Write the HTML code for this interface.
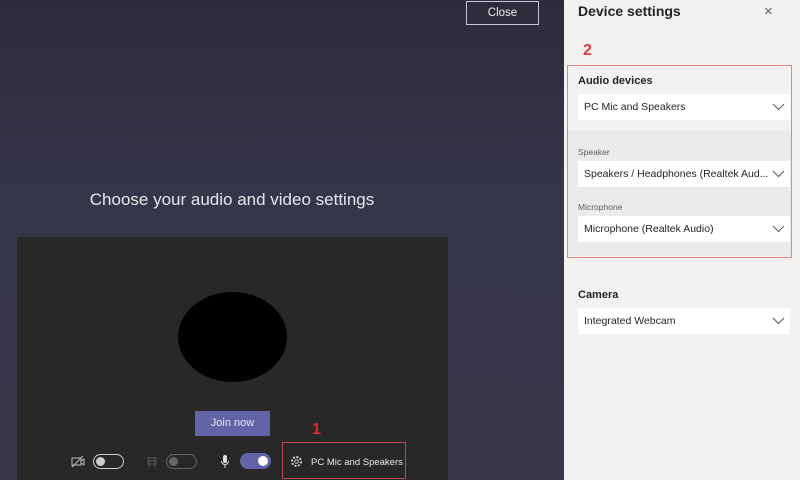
<!DOCTYPE html>
<html><head><style>
*{margin:0;padding:0;box-sizing:border-box}
body{width:800px;height:480px;overflow:hidden;position:relative;font-family:"Liberation Sans",sans-serif;background:linear-gradient(#2c2c3a,#363649 40%,#383849)}
.a{position:absolute}
.dd{position:absolute;left:578px;width:212px;height:26px;background:#fff;font-size:10.5px;color:#252423;padding:7px 0 0 6px;white-space:nowrap;overflow:hidden}
.dd svg{position:absolute;right:5px;top:9px}
.lbl{position:absolute;left:578px;font-size:8.5px;color:#605e5c}
.h{position:absolute;left:578px;font-size:11px;font-weight:bold;color:#252423}
.tog{position:absolute;width:31px;height:15px;border-radius:8px;border:1.5px solid #cfcfcf}
.tog i{position:absolute;top:2px;width:9px;height:9px;border-radius:50%;background:#cfcfcf}
</style></head><body>
<div class="a" style="left:466px;top:1px;width:73px;height:24px;border:1px solid #c8c8d0;color:#eee;font-size:11.5px;text-align:center;line-height:22px">Close</div>
<div class="a" style="left:0;top:190px;width:464px;text-align:center;color:#e6e6ea;font-size:17px">Choose your audio and video settings</div>
<div class="a" style="left:17px;top:237px;width:431px;height:243px;background:#292828"></div>
<div class="a" style="left:178px;top:292px;width:109px;height:90px;border-radius:50%;background:#000"></div>
<div class="a" style="left:195px;top:411px;width:75px;height:25px;background:#6264a7;color:#e8e8f4;font-size:11px;text-align:center;line-height:25px">Join now</div>
<div class="a" style="left:312px;top:421px;color:#e02828;font-size:16px;font-weight:bold">1</div>
<div class="a" style="left:282px;top:442px;width:124px;height:37px;border:1px solid #c04848"></div>
<svg class="a" style="left:71px;top:455px" width="14" height="13" viewBox="0 0 14 13"><rect x="1" y="3" width="9" height="7" fill="none" stroke="#bbb"/><path d="M10 6l3-2v6l-3-2M1 12L12 1" fill="none" stroke="#bbb"/></svg>
<div class="tog" style="left:93px;top:454px"><i style="left:2px"></i></div>
<svg class="a" style="left:146px;top:456px" width="12" height="11"><path d="M1 2h10M1 5h10M1 8h10M3 1v10M9 1v10" stroke="#666" stroke-width="0.8"/></svg>
<div class="tog" style="left:166px;top:454px;border-color:#666"><i style="left:2px;background:#666"></i></div>
<svg class="a" style="left:220px;top:454px" width="10" height="15"><rect x="3" y="1" width="4" height="8" rx="2" fill="#ddd"/><path d="M1.5 7a3.5 3.5 0 0 0 7 0M5 11v3" stroke="#ddd" fill="none"/></svg>
<div class="a" style="left:240px;top:453px;width:31px;height:16px;border-radius:8px;background:#6264a7"><i style="position:absolute;left:18px;top:3px;width:10px;height:10px;border-radius:50%;background:#fff"></i></div>
<svg class="a" style="left:290px;top:455px" width="13" height="13" viewBox="0 0 13 13"><circle cx="6.5" cy="6.5" r="4.5" fill="none" stroke="#ccc" stroke-dasharray="2 1.5" stroke-width="2"/><circle cx="6.5" cy="6.5" r="1.8" fill="none" stroke="#ccc"/></svg>
<div class="a" style="left:311px;top:457px;color:#e8e8e8;font-size:9.5px">PC Mic and Speakers</div>

<div class="a" style="left:564px;top:0;width:236px;height:480px;background:#f3f2f1"></div>
<div class="a" style="left:578px;top:3px;font-size:14px;font-weight:bold;color:#252423">Device settings</div>
<div class="a" style="left:764px;top:3px;font-size:15px;color:#605e5c">×</div>
<div class="a" style="left:583px;top:42px;color:#d83b3b;font-size:16px;font-weight:bold">2</div>
<div class="a" style="left:567px;top:131px;width:225px;height:125px;background:#ebebeb"></div>
<div class="a" style="left:567px;top:65px;width:225px;height:193px;border:1.5px solid #e8868c"></div>
<div class="h" style="top:75px">Audio devices</div>
<div class="dd" style="top:94px">PC Mic and Speakers<svg width="13" height="8"><path d="M1 1l5.5 5.5L12 1" stroke="#555" fill="none"/></svg></div>
<div class="lbl" style="top:147px">Speaker</div>
<div class="dd" style="top:161px">Speakers / Headphones (Realtek Aud...<svg width="13" height="8"><path d="M1 1l5.5 5.5L12 1" stroke="#555" fill="none"/></svg></div>
<div class="lbl" style="top:202px">Microphone</div>
<div class="dd" style="top:216px">Microphone (Realtek Audio)<svg width="13" height="8"><path d="M1 1l5.5 5.5L12 1" stroke="#555" fill="none"/></svg></div>
<div class="h" style="top:289px">Camera</div>
<div class="dd" style="top:308px">Integrated Webcam<svg width="13" height="8"><path d="M1 1l5.5 5.5L12 1" stroke="#555" fill="none"/></svg></div>
</body></html>
